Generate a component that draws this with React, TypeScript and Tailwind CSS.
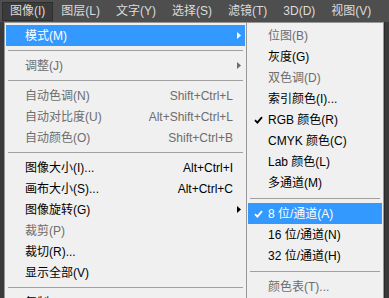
import React from 'react'

const FONT = { fontFamily: '"Liberation Sans", "Noto Sans CJK SC", sans-serif' }

const BAR = ['图像(I)', '图层(L)', '文字(Y)', '选择(S)', '滤镜(T)', '3D(D)', '视图(V)']

type Item =
  | { sep: true }
  | { sep?: false; label: string; key?: string; off?: boolean; sub?: boolean; on?: boolean; check?: boolean }

// 图像 메뉴
const MAIN: Item[] = [
  { label: '模式(M)', sub: true, on: true },
  { sep: true },
  { label: '调整(J)', sub: true, off: true },
  { sep: true },
  { label: '自动色调(N)', key: 'Shift+Ctrl+L', off: true },
  { label: '自动对比度(U)', key: 'Alt+Shift+Ctrl+L', off: true },
  { label: '自动颜色(O)', key: 'Shift+Ctrl+B', off: true },
  { sep: true },
  { label: '图像大小(I)...', key: 'Alt+Ctrl+I' },
  { label: '画布大小(S)...', key: 'Alt+Ctrl+C' },
  { label: '图像旋转(G)', sub: true },
  { label: '裁剪(P)', off: true },
  { label: '裁切(R)...' },
  { label: '显示全部(V)' },
  { sep: true },
  { label: '复制(D)...' },
]

// 모드 서브메뉴
const MODES: Item[] = [
  { label: '位图(B)', off: true },
  { label: '灰度(G)' },
  { label: '双色调(D)', off: true },
  { label: '索引颜色(I)...' },
  { label: 'RGB 颜色(R)', check: true },
  { label: 'CMYK 颜色(C)' },
  { label: 'Lab 颜色(L)' },
  { label: '多通道(M)' },
  { sep: true },
  { label: '8 位/通道(A)', check: true, on: true },
  { label: '16 位/通道(N)' },
  { label: '32 位/通道(H)' },
  { sep: true },
  { label: '颜色表(T)...', off: true },
]

function Check({ white }: { white?: boolean }) {
  return (
    <svg width="9" height="8" viewBox="0 0 9 8">
      <path d="M1 4.2 L3.4 6.6 L8 1.2" fill="none" stroke={white ? '#fff' : '#000'} strokeWidth="1.8" />
    </svg>
  )
}

function Arrow({ color }: { color: string }) {
  return (
    <svg width="4" height="7" viewBox="0 0 4 7">
      <path d="M0 0 L4 3.5 L0 7 Z" fill={color} />
    </svg>
  )
}

function Row({ item, indent, sepH }: { item: Item; indent: string; sepH: string }) {
  if (item.sep) {
    return (
      <div className={`${sepH} flex items-center px-[2px]`}>
        <div className="w-full h-px bg-[#a0a0a0]" />
      </div>
    )
  }
  const color = item.on ? 'text-white' : item.off ? 'text-[#6d6d6d]' : 'text-black'
  return (
    <div className={`h-[21px] flex items-center ${item.on ? 'bg-[#3399ff]' : ''} ${color}`}>
      <div className={`${indent} shrink-0 flex justify-center items-center`}>
        {item.check && <Check white={item.on} />}
      </div>
      <span className="flex-1 whitespace-nowrap">{item.label}</span>
      {item.key && <span className="whitespace-nowrap pr-[12px]">{item.key}</span>}
      {item.sub && (
        <span className="pr-[4px] flex items-center">
          <Arrow color={item.on ? '#fff' : item.off ? '#6d6d6d' : '#000'} />
        </span>
      )}
    </div>
  )
}

export default function App() {
  return (
    <div className="w-[389px] h-[298px] overflow-hidden bg-[#3a3a3a] text-[12px] leading-none" style={FONT}>
      {/* 메뉴바 */}
      <div className="h-[22px] bg-[#4e4e4e] flex items-center pl-[2px]">
        {BAR.map((b, i) => (
          <div
            key={b}
            className={`h-[19px] px-[7px] flex items-center whitespace-nowrap text-[12px] text-[#dcdcdc] border ${
              i === 0 ? 'bg-[#3b3b3b] border-[#2e2e2e]' : 'border-transparent'
            }`}
          >
            {b}
          </div>
        ))}
      </div>

      <div className="flex">
        <div className="w-[4px] shrink-0" />
        {/* 이미지 메뉴 */}
        <div className="w-[243px] h-[290px] shrink-0 bg-[#f0f0f0] border border-[#979797] pt-[2px] px-px">
          {MAIN.map((it, i) => (
            <Row key={i} item={it} indent="w-[19px]" sepH="h-[9px]" />
          ))}
        </div>
        {/* 모드 서브메뉴 */}
        <div className="w-[138px] h-[290px] shrink-0 bg-[#f0f0f0] border border-[#979797] -ml-px pt-[2px] px-px">
          {MODES.map((it, i) => (
            <Row key={i} item={it} indent="w-[20px]" sepH="h-[10px]" />
          ))}
        </div>
        <div className="flex-1 border-l border-[#2a2a2a]" />
      </div>
    </div>
  )
}
